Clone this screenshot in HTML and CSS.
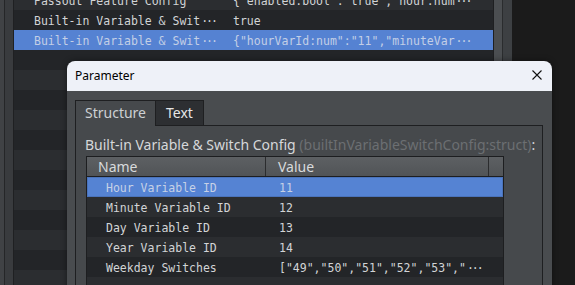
FILE: index.html
```html
<!DOCTYPE html>
<html lang="en">
<head>
    <meta charset="UTF-8">
    <title>Parameter</title>
    <link rel="stylesheet" href="styles.css">
</head>
<body>
    <div class="app">
        <div class="gutter"></div>
        <div class="list">
            <div class="row"><span>Passout Feature Config</span><span>{"enabled:bool":"true","hour:num<i class="more">···</i></span></div>
            <div class="row"><span>Built-in Variable &amp; Swit<i class="more">···</i></span><span>true</span></div>
            <div class="row selected"><span>Built-in Variable &amp; Swit<i class="more">···</i></span><span>{"hourVarId:num":"11","minuteVar<i class="more">···</i></span></div>
            <div class="row"><span></span><span></span></div>
            <div class="row"><span></span><span></span></div>
            <div class="row"><span></span><span></span></div>
            <div class="row"><span></span><span></span></div>
            <div class="row"><span></span><span></span></div>
            <div class="row"><span></span><span></span></div>
            <div class="row"><span></span><span></span></div>
            <div class="row"><span></span><span></span></div>
            <div class="row"><span></span><span></span></div>
            <div class="row"><span></span><span></span></div>
            <div class="row"><span></span><span></span></div>
            <div class="row"><span></span><span></span></div>
        </div>
        <div class="vscroll"></div>
        <div class="void"></div>
    </div>

    <div class="dialog">
        <div class="titlebar">
            <span>Parameter</span>
            <svg class="close" width="10" height="10" viewBox="0 0 10 10">
                <path d="M0.5 0.5 L9.5 9.5 M9.5 0.5 L0.5 9.5" stroke="#111" stroke-width="1.1" fill="none"/>
            </svg>
        </div>
        <div class="dialog-body">
            <div class="tabs">
                <div class="tab active">Structure</div>
                <div class="tab">Text</div>
            </div>
            <div class="panel">
                <div class="label">Built-in Variable &amp; Switch Config <span class="type">(builtInVariableSwitchConfig:struct)</span>:</div>
                <div class="table">
                    <div class="thead">
                        <div class="th name">Name</div>
                        <div class="th value">Value</div>
                        <div class="th filler"></div>
                    </div>
                    <div class="trow selected"><span>Hour Variable ID</span><span>11</span></div>
                    <div class="trow"><span>Minute Variable ID</span><span>12</span></div>
                    <div class="trow"><span>Day Variable ID</span><span>13</span></div>
                    <div class="trow"><span>Year Variable ID</span><span>14</span></div>
                    <div class="trow"><span>Weekday Switches</span><span>["49","50","51","52","53","<i class="more">···</i></span></div>
                    <div class="trow"><span></span><span></span></div>
                </div>
            </div>
        </div>
    </div>
</body>
</html>
```

FILE: styles.css
```css
body {
    margin: 0;
    width: 575px;
    height: 285px;
    overflow: hidden;
    position: relative;
    background-color: #1b1b1b;
    font-family: "Noto Sans", "Open Sans", sans-serif;
}

/* window behind the dialog */
.app {
    display: flex;
    height: 285px;
}

.gutter {
    width: 14px;
    background: linear-gradient(to right, #404245 0 4px, #252628 4px 5px, #393b3e 5px 13px, #1f2022 13px 14px);
}

.list {
    width: 479px;
    margin-top: -10px;
    background-color: #232528;
}

.row {
    display: grid;
    grid-template-columns: 219px 1fr;
    height: 20px;
    box-sizing: border-box;
    padding-top: 3px;
    line-height: 17px;
    font-family: "DejaVu Sans Mono", monospace;
    font-size: 11.5px;
    color: #d2d4d6;
    white-space: nowrap;
    overflow: hidden;
}

.row span:first-child {
    padding-left: 20px;
}

.row:nth-child(odd) {
    background-color: #2b2d30;
}

.row.selected {
    background-color: #5582d2;
    color: #c3cfe6;
}

/* elided text marker */
.more {
    font-style: normal;
    letter-spacing: -2px;
    margin-left: 1px;
}

.vscroll {
    width: 19px;
    background: linear-gradient(to right, #1e1f21 0 1px, #4b4e51 1px 9px, #2a2c2e 9px 10px, #3d4043 10px 19px);
}

.void {
    flex: 1;
    background-color: #1b1b1b;
}

/* dialog */
.dialog {
    position: absolute;
    left: 67px;
    top: 61px;
    width: 485px;
    height: 230px;
    border-radius: 8px 8px 0 0;
    overflow: hidden;
    box-shadow: 0 0 6px rgba(0, 0, 0, 0.45);
}

.titlebar {
    height: 30px;
    box-sizing: border-box;
    padding: 0 10px 2px 8px;
    display: flex;
    align-items: center;
    justify-content: space-between;
    background-color: #eef1f8;
    font-size: 12px;
    color: #000;
}

.close {
    display: block;
}

.dialog-body {
    height: 200px;
    padding: 9px 9px 0 8px;
    background-color: #494c4f;
}

.tabs {
    display: flex;
    height: 25px;
}

.tab {
    box-sizing: border-box;
    height: 25px;
    padding: 0 10px;
    border: 1px solid #1e1f21;
    border-bottom: none;
    border-left: none;
    line-height: 23px;
    font-size: 14px;
    color: #e6e6e6;
    background-color: #2d2f32;
}

.tab.active {
    position: relative;
    z-index: 1;
    width: 81px;
    height: 26px;
    padding-left: 9px;
    border-left: 1px solid #1e1f21;
    color: #cdd0d3;
    background-color: #46494c;
}

.panel {
    height: 200px;
    padding: 10px 0 0 10px;
    border: 1px solid #1e1f21;
    background-color: #46494c;
}

.label {
    margin: 0 0 2px -1px;
    line-height: 18px;
    font-size: 14px;
    color: #d6d8da;
    white-space: nowrap;
}

.label .type {
    color: #6c6f72;
}

.table {
    width: 418px;
    box-sizing: border-box;
    border: 1px solid #1d1e20;
}

.thead {
    display: grid;
    grid-template-columns: 179px 223px 1fr;
    height: 20px;
    box-sizing: border-box;
    border-bottom: 1px solid #1d1e20;
    background: linear-gradient(#5d6063, #515457);
}

.th {
    line-height: 19px;
    font-size: 14px;
    color: #d8dadc;
    border-right: 1px solid #2b2c2e;
}

.th.name {
    padding-left: 11px;
}

.th.value {
    padding-left: 12px;
}

.th.filler {
    border-right: none;
}

.trow {
    display: grid;
    grid-template-columns: 179px 1fr;
    height: 20px;
    box-sizing: border-box;
    padding-top: 3px;
    line-height: 17px;
    font-family: "DejaVu Sans Mono", monospace;
    font-size: 11.5px;
    color: #d2d4d6;
    white-space: nowrap;
    background-color: #232528;
}

.trow:nth-child(odd) {
    background-color: #2b2d30;
}

.trow span:first-child {
    padding-left: 19px;
}

.trow span:last-child {
    padding-left: 13px;
}

.trow.selected {
    background-color: #5583d3;
    box-shadow: inset 0 0 0 1px #4a73bb;
    color: #c6d1e6;
}
```
